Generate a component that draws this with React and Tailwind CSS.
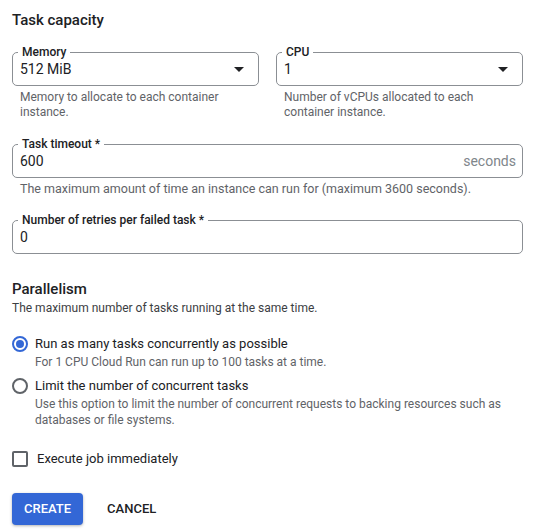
// Cloud Run job — task capacity form
function Caret() {
	return (
		<svg width="10" height="5" viewBox="0 0 10 5" className="shrink-0">
			<path d="M0 0h10L5 5z" fill="#202124" />
		</svg>
	);
}

function OutlinedField({ label, value, suffix, select }) {
	return (
		<div className="relative h-[34px] border border-[#8b8f94] rounded-[5px] flex items-center pl-[7px] pr-[6px]">
			<span className="absolute -top-[9px] left-[5px] px-[4px] bg-white text-[12px] leading-[16px] font-medium text-[#202124]">
				{label}
			</span>
			<span className="flex-1 text-[14px] text-[#202124]">{value}</span>
			{suffix && <span className="text-[14px] text-[#80868b]">{suffix}</span>}
			{select && <span className="pr-[8px] flex items-center"><Caret /></span>}
		</div>
	);
}

function Radio({ checked }) {
	return checked ? (
		<span className="mt-[2px] w-[16px] h-[16px] rounded-full border-2 border-[#3367d6] flex items-center justify-center shrink-0">
			<span className="w-[8px] h-[8px] rounded-full bg-[#3367d6]" />
		</span>
	) : (
		<span className="mt-[2px] w-[16px] h-[16px] rounded-full border-2 border-[#5f6368] shrink-0" />
	);
}

export default function App() {
	return (
		<div className="bg-white min-h-screen pl-[12px] pr-[24px] pt-[8px] text-[#202124]" style={{ fontFamily: 'Roboto, "Liberation Sans", sans-serif' }}>
			<h2 className="text-[15px] leading-[24px] font-medium">Task capacity</h2>

			{/* memory + cpu */}
			<div className="mt-[20px] grid grid-cols-2 gap-x-[17px]">
				<div>
					<OutlinedField label="Memory" value="512 MiB" select />
					<p className="mt-[4px] px-[8px] text-[12px] leading-[15px] text-[#5f6368]">
						Memory to allocate to each container instance.
					</p>
				</div>
				<div>
					<OutlinedField label="CPU" value="1" select />
					<p className="mt-[4px] px-[8px] text-[12px] leading-[15px] text-[#5f6368]">
						Number of vCPUs allocated to each container instance.
					</p>
				</div>
			</div>

			<div className="mt-[24px]">
				<OutlinedField label="Task timeout *" value="600" suffix="seconds" />
				<p className="mt-[3px] px-[8px] text-[12.5px] leading-[15px] text-[#5f6368]">
					The maximum amount of time an instance can run for (maximum 3600 seconds).
				</p>
			</div>

			<div className="mt-[24px]">
				<OutlinedField label="Number of retries per failed task *" value="0" />
			</div>

			{/* parallelism */}
			<h2 className="mt-[25px] text-[15px] leading-[20px] font-medium">Parallelism</h2>
			<p className="text-[12px] leading-[18px] text-[#3c4043]">The maximum number of tasks running at the same time.</p>

			<div className="mt-[17px] flex gap-[7px]">
				<Radio checked />
				<div>
					<p className="text-[13px] leading-[20px]">Run as many tasks concurrently as possible</p>
					<p className="text-[12px] leading-[16px] text-[#5f6368]">For 1 CPU Cloud Run can run up to 100 tasks at a time.</p>
				</div>
			</div>
			<div className="mt-[6px] flex gap-[7px]">
				<Radio />
				<div>
					<p className="text-[13px] leading-[20px]">Limit the number of concurrent tasks</p>
					<p className="text-[12px] leading-[16px] text-[#5f6368]">
						Use this option to limit the number of concurrent requests to backing resources such as databases or file systems.
					</p>
				</div>
			</div>

			<div className="mt-[21px] flex items-center gap-[9px]">
				<span className="w-[16px] h-[16px] border-2 border-[#5f6368] rounded-[2px]" />
				<span className="text-[13px] leading-[20px]">Execute job immediately</span>
			</div>

			<div className="mt-[24px] flex items-center gap-[12px]">
				<button className="h-[32px] px-[12px] bg-[#3367d6] text-white text-[13px] font-medium rounded-[4px] shadow-[0_1px_3px_rgba(0,0,0,0.3)]">
					CREATE
				</button>
				<button className="h-[32px] px-[12px] text-[#202124] text-[13px] font-medium">
					CANCEL
				</button>
			</div>
		</div>
	);
}
